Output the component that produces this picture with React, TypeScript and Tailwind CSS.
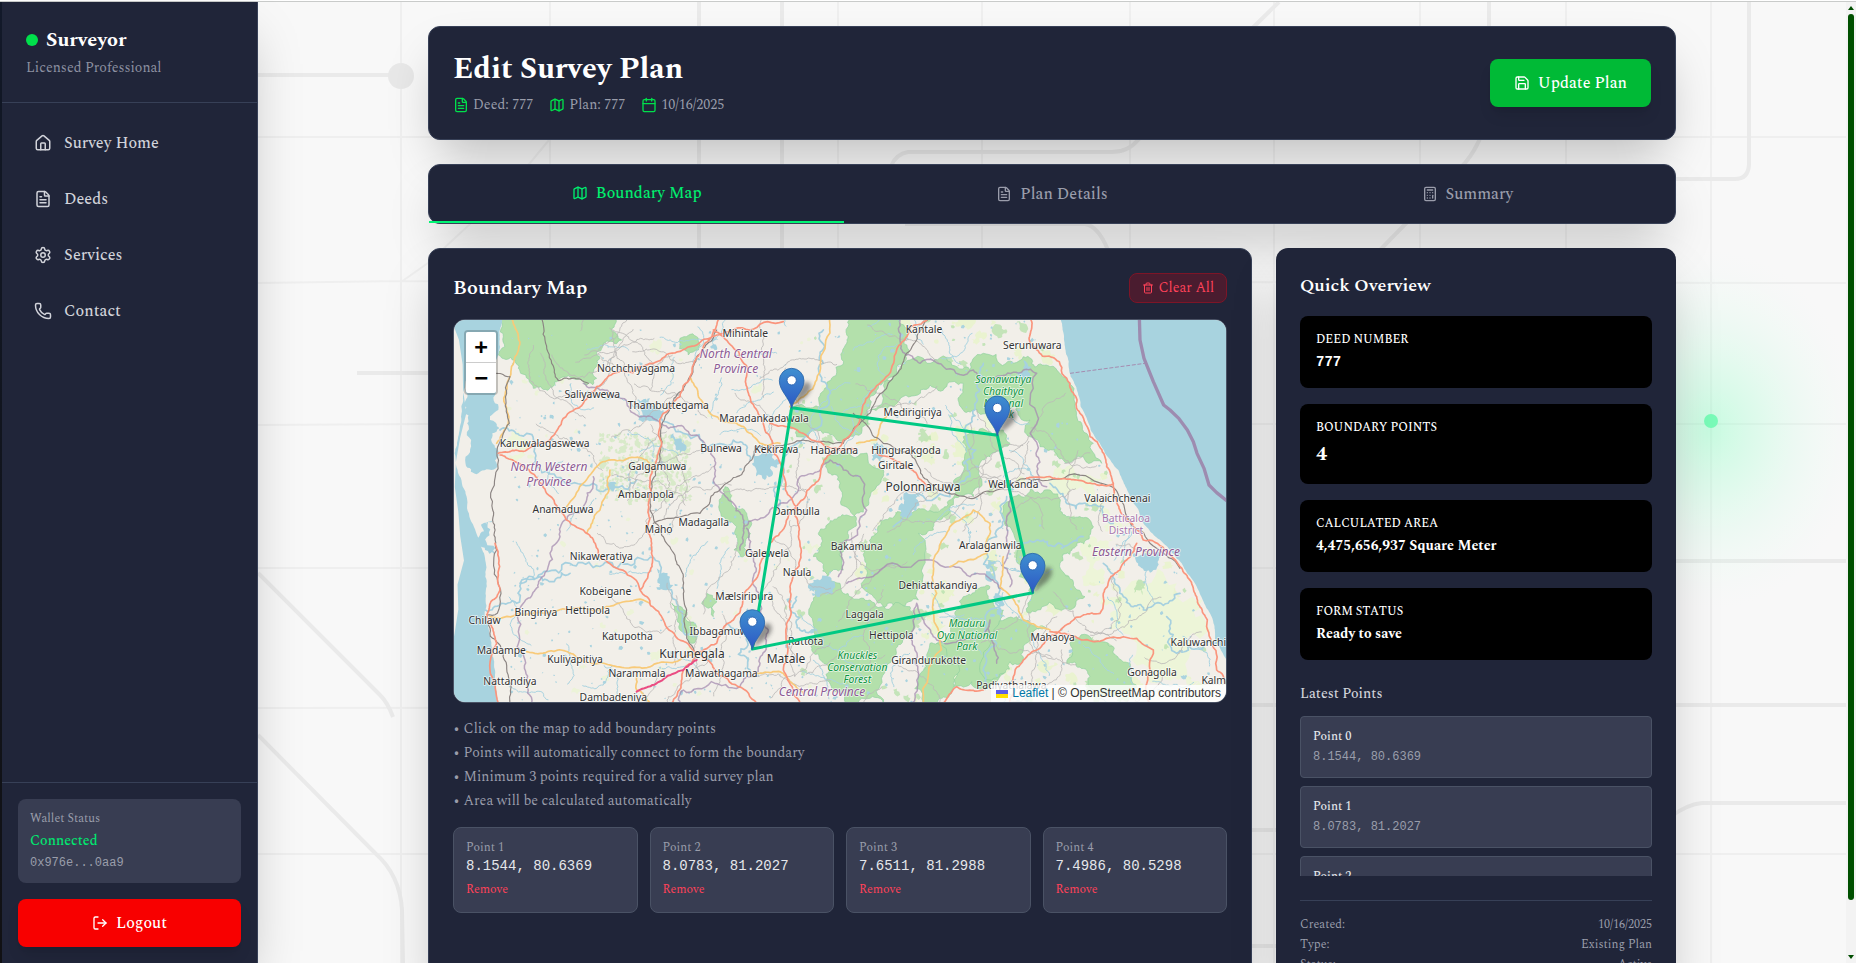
import React from "react";
import {
  Calculator,
  Calendar,
  FileText,
  House,
  LogOut,
  Map as MapIcon,
  Phone,
  Save,
  Settings,
  Trash2,
} from "lucide-react";

type Pt = [number, number];

function makeRandom(seed: number) {
  let s = seed;
  return () => {
    s = (s * 1664525 + 1013904223) % 4294967296;
    return s / 4294967296;
  };
}

/** Subdivides a line with midpoint displacement so that coasts and roads look natural. */
function rough(points: Pt[], amp: number, seed: number, closed = false): string {
  const rnd = makeRandom(seed);
  const source = closed ? [...points, points[0]] : points;
  const out: Pt[] = [source[0]];
  const split = (a: Pt, b: Pt, depth: number) => {
    const dx = b[0] - a[0];
    const dy = b[1] - a[1];
    const len = Math.hypot(dx, dy);
    if (depth === 0 || len < 10) {
      out.push(b);
      return;
    }
    const k = (rnd() - 0.5) * amp;
    const mid: Pt = [(a[0] + b[0]) / 2 - dy * k, (a[1] + b[1]) / 2 + dx * k];
    split(a, mid, depth - 1);
    split(mid, b, depth - 1);
  };
  for (let i = 1; i < source.length; i++) split(source[i - 1], source[i], 4);
  return "M" + out.map((p) => `${p[0].toFixed(1)} ${p[1].toFixed(1)}`).join("L") + (closed ? "Z" : "");
}

const westSea: Pt[] = [
  [0, 20], [157, 20], [150, 110], [132, 160], [62, 180], [40, 250], [34, 330], [14, 430], [50, 560],
  [88, 690], [106, 800], [104, 915], [125, 1010], [135, 1100], [148, 1190], [0, 1190],
];
const lagoon: Pt[] = [
  [50, 225], [138, 240], [145, 300], [120, 330], [148, 355], [125, 395], [145, 430], [138, 475], [85, 490],
  [48, 468], [62, 400], [55, 330], [42, 280],
];
const eastCoast: Pt[] = [
  [1828, 20], [1845, 110], [1862, 200], [1892, 290], [1922, 360], [1965, 430], [2005, 480], [2040, 560],
  [2080, 640], [2140, 700], [2195, 760], [2245, 840], [2285, 920], [2298, 1000], [2335, 1060],
];
const eastSea: Pt[] = [...eastCoast, [2345, 20]];

const forests: Pt[][] = [
  [[155, 20], [490, 20], [485, 60], [515, 90], [440, 125], [440, 205], [405, 225], [365, 205], [325, 212], [250, 235], [212, 190], [195, 150], [145, 135], [160, 80]],
  [[1345, 20], [1375, 130], [1330, 200], [1250, 300], [1180, 390], [1100, 360], [1040, 380], [1020, 300], [1110, 290], [1150, 200], [1190, 100], [1205, 20]],
  [[1340, 190], [1380, 150], [1440, 160], [1560, 180], [1600, 130], [1720, 140], [1800, 170], [1850, 210], [1872, 270], [1895, 340], [1930, 400], [1955, 460], [1900, 440], [1840, 450], [1770, 410], [1740, 330], [1700, 290], [1620, 310], [1540, 300], [1540, 220], [1440, 225], [1330, 290], [1260, 300]],
  [[1540, 380], [1660, 360], [1680, 400], [1620, 440], [1590, 500], [1570, 560], [1480, 620], [1450, 660], [1405, 670], [1405, 870], [1350, 885], [1270, 860], [1250, 760], [1265, 680], [1290, 630], [1400, 600], [1490, 590], [1530, 500]],
  [[1105, 670], [1190, 615], [1260, 560], [1290, 520], [1300, 480], [1180, 430], [1130, 440], [1170, 520], [1200, 600], [1190, 690], [1180, 780], [1130, 800], [1090, 740]],
  [[1100, 830], [1170, 820], [1260, 870], [1380, 890], [1390, 960], [1330, 1040], [1300, 1180], [1190, 1180], [1140, 1080], [1085, 1020], [1090, 940]],
  [[1540, 860], [1620, 830], [1660, 900], [1640, 1000], [1620, 1130], [1510, 1130], [1500, 1060], [1460, 1000], [1520, 920]],
  [[1690, 560], [1800, 540], [1850, 620], [1930, 650], [1880, 700], [1830, 760], [1905, 860], [1860, 900], [1740, 910], [1740, 850], [1700, 740]],
  [[1640, 950], [1700, 920], [1790, 955], [1720, 1050], [1660, 1090], [1620, 1110]],
  [[1860, 1000], [1920, 980], [1990, 1010], [2040, 1060], [2060, 1130], [1990, 1160], [1920, 1100], [1850, 1060]],
  [[825, 530], [850, 590], [890, 610], [895, 660], [872, 740], [852, 720], [860, 650], [808, 600]],
  [[665, 880], [740, 950], [725, 1000], [690, 960]],
  [[690, 85], [740, 80], [745, 120], [715, 135]],
  [[1440, 1000], [1480, 1010], [1510, 1120], [1460, 1180], [1420, 1180]],
  [[770, 850], [800, 870], [790, 920], [755, 880]],
];

const palePatches: Pt[][] = [
  [[1600, 320], [1650, 300], [1650, 350], [1590, 370]],
  [[1760, 480], [1960, 500], [2040, 640], [1960, 650], [1830, 560]],
  [[1950, 860], [2180, 820], [2280, 960], [2250, 1180], [2120, 1120], [1980, 960]],
  [[1880, 700], [1990, 690], [1960, 800], [1900, 820]],
  [[160, 380], [210, 370], [220, 420], [190, 450]],
];

const trunkRoads: Pt[][] = [
  [[810, 20], [760, 110], [720, 200], [690, 260], [640, 310], [635, 400], [600, 520], [595, 600], [605, 700], [595, 790], [570, 840]],
  [[145, 430], [230, 420], [300, 390], [400, 280], [440, 230], [490, 190], [600, 160], [720, 110], [820, 70], [1000, 35]],
  [[150, 435], [220, 470], [290, 550], [400, 660], [450, 740], [570, 840], [640, 930], [740, 1030], [800, 1090], [920, 1180]],
  [[790, 60], [820, 80], [895, 180], [900, 260], [960, 380], [1000, 480], [1040, 590], [1050, 700], [1020, 830], [1010, 950], [1000, 1080], [1050, 1180]],
  [[960, 340], [1060, 370], [1170, 420], [1215, 420]],
  [[1040, 590], [1110, 500], [1180, 390], [1260, 250], [1340, 120], [1380, 50], [1440, 20]],
  [[1040, 590], [960, 700], [900, 830], [850, 930], [800, 1000], [740, 1030], [700, 1080], [665, 1180]],
  [[1740, 20], [1740, 100], [1828, 155], [1860, 220], [1890, 310], [1920, 380], [1970, 470], [1990, 520], [2010, 600], [2080, 690], [2190, 770], [2235, 850], [2272, 930], [2300, 1080], [2328, 1120]],
  [[1990, 522], [1880, 510], [1800, 500], [1730, 505]],
  [[2060, 700], [2010, 780], [1960, 850], [1950, 910], [1860, 940], [1800, 980], [1720, 1050], [1690, 1100], [1680, 1180]],
  [[1800, 965], [1900, 990], [2060, 985], [2110, 1020], [2100, 1180]],
  [[135, 700], [150, 840], [110, 915], [140, 1000], [145, 1180]],
  [[1280, 430], [1370, 470], [1430, 530]],
  [[1480, 1180], [1520, 1130], [1600, 1140]],
];
const yellowRoads: Pt[][] = [
  [[720, 200], [760, 280], [860, 340], [930, 400], [990, 400]],
  [[350, 590], [450, 460], [590, 450], [620, 480]],
  [[410, 670], [450, 600], [480, 480]],
  [[120, 920], [280, 910], [440, 900], [600, 880]],
  [[230, 1025], [360, 1030], [500, 1070], [620, 1060], [740, 1030]],
  [[1570, 600], [1510, 640], [1450, 750], [1460, 850], [1420, 1180]],
  [[1570, 600], [1620, 640], [1610, 730], [1500, 770]],
  [[1140, 20], [1100, 210], [1020, 290]],
  [[180, 20], [205, 80], [180, 200], [170, 350], [140, 400]],
  [[1660, 740], [1650, 830], [1720, 930], [1800, 960]],
  [[920, 1090], [1000, 1090], [1060, 1150]],
  [[1220, 400], [1280, 390], [1310, 320]],
  [[560, 1090], [560, 1140], [600, 1180]],
];
const railways: Pt[][] = [
  [[800, 60], [740, 140], [700, 240], [645, 320], [632, 420], [605, 520], [600, 600], [650, 700], [700, 800], [710, 900], [735, 1030]],
  [[140, 190], [180, 200], [178, 340], [148, 400], [128, 600], [140, 720], [142, 910], [110, 915], [160, 1030], [180, 1180]],
  [[610, 640], [750, 610], [830, 520], [905, 450], [915, 410], [1060, 390], [1180, 400], [1260, 310], [1330, 200], [1400, 90], [1450, 20]],
  [[1210, 310], [1300, 400], [1380, 430], [1440, 520], [1560, 565], [1640, 540], [1730, 505], [1980, 528], [2050, 650], [2190, 775]],
  [[275, 20], [285, 90], [305, 160], [325, 212], [365, 205], [415, 220]],
];
const borders: Pt[][] = [
  [[400, 220], [450, 240], [540, 300], [620, 330], [700, 350], [780, 420], [790, 510], [850, 580], [880, 660], [870, 720]],
  [[880, 655], [960, 600], [1030, 560], [1050, 500], [1140, 450], [1180, 480], [1230, 500], [1200, 690], [1170, 700], [1165, 800]],
  [[430, 500], [400, 600], [330, 680], [270, 810], [220, 880], [225, 1050], [245, 1180]],
  [[1345, 20], [1350, 90], [1410, 160], [1570, 180], [1600, 220], [1720, 180], [1760, 190], [1758, 430], [1790, 530]],
  [[1680, 560], [1670, 700], [1680, 830]],
  [[1190, 820], [1290, 780], [1500, 770], [1560, 800], [1660, 840]],
  [[890, 655], [915, 760], [930, 880], [955, 960], [930, 1060], [870, 1130], [700, 1140], [690, 1180]],
  [[1400, 880], [1395, 1020], [1385, 1180]],
  [[1400, 880], [1450, 980], [1500, 1000], [1620, 930], [1640, 1060]],
];
const rivers: Pt[][] = [
  [[210, 820], [360, 760], [500, 775], [630, 765], [680, 880], [730, 980]],
  [[100, 900], [200, 880], [270, 800], [360, 790]],
  [[1600, 160], [1590, 240], [1560, 340], [1560, 500], [1500, 560], [1330, 650]],
  [[1670, 560], [1640, 680], [1650, 840], [1640, 1000], [1610, 1120]],
  [[1120, 60], [1120, 160], [1130, 290], [1000, 470], [980, 600]],
  [[560, 290], [700, 370], [850, 390], [900, 450]],
  [[150, 360], [230, 370], [260, 470], [430, 520], [560, 510]],
  [[1040, 860], [1020, 900], [1050, 960], [1100, 960]],
  [[1800, 520], [1850, 580], [1960, 590], [1990, 640]],
  [[1960, 760], [2020, 860], [2080, 900], [2190, 850]],
  [[2150, 920], [2180, 1030], [2260, 1010], [2300, 1000]],
  [[1700, 700], [1780, 690], [1860, 700], [1900, 680]],
  [[830, 940], [890, 980], [900, 1080]],
];
const lakes: Pt[][] = [
  [[560, 270], [600, 265], [640, 300], [620, 335], [565, 330]],
  [[910, 430], [965, 425], [985, 450], [960, 475], [945, 510], [915, 470]],
  [[620, 775], [660, 800], [670, 825], [640, 840], [622, 810]],
  [[1360, 560], [1410, 545], [1400, 590], [1370, 625], [1345, 600]],
  [[1270, 400], [1310, 410], [1300, 460], [1265, 450]],
  [[1635, 850], [1660, 860], [1665, 920], [1620, 920]],
  [[1610, 750], [1640, 760], [1630, 810], [1605, 800]],
  [[1720, 150], [1745, 170], [1740, 200], [1700, 200]],
  [[1090, 810], [1140, 800], [1150, 850], [1110, 860]],
  [[780, 80], [805, 90], [800, 120], [780, 110]],
  [[2050, 730], [2130, 730], [2110, 780], [2070, 770]],
  [[670, 370], [700, 400], [690, 430], [672, 400]],
  [[470, 510], [500, 520], [490, 545], [470, 540]],
  [[100, 640], [130, 630], [135, 730], [105, 720]],
];

function insideLand(x: number, y: number) {
  if (x < 175) return false;
  for (let i = 1; i < eastCoast.length; i++) {
    const [x0, y0] = eastCoast[i - 1];
    const [x1, y1] = eastCoast[i];
    if (y >= y0 && y <= y1) return x < x0 + ((x1 - x0) * (y - y0)) / (y1 - y0) - 30;
  }
  return x < 2300;
}

type Area = [number, number, number, number];
const everywhere: Area = [12, 30, 2316, 1146];

function scatter(count: number, seed: number, min: number, max: number, amp: number, area: Area = everywhere): string {
  const rnd = makeRandom(seed);
  const parts: string[] = [];
  while (parts.length < count) {
    const x = area[0] + rnd() * area[2];
    const y = area[1] + rnd() * area[3];
    const r = min + rnd() * rnd() * (max - min);
    if (!insideLand(x, y)) continue;
    const ring: Pt[] = [];
    for (let k = 0; k < 5; k++) {
      const a = (k / 5) * Math.PI * 2;
      const q = r * (0.5 + rnd());
      ring.push([x + Math.cos(a) * q, y + Math.sin(a) * q]);
    }
    parts.push(rough(ring, amp, Math.floor(rnd() * 99999), true));
  }
  return parts.join("");
}

function wander(count: number, seed: number, step: number): string {
  const rnd = makeRandom(seed);
  const parts: string[] = [];
  while (parts.length < count) {
    let x = 150 + rnd() * 2050;
    let y = 30 + rnd() * 1146;
    let a = rnd() * Math.PI * 2;
    const pts: Pt[] = [];
    while (pts.length < 7 && insideLand(x, y)) {
      pts.push([x, y]);
      a += (rnd() - 0.5) * 1.3;
      x += Math.cos(a) * step;
      y += Math.sin(a) * step;
    }
    if (pts.length > 2) parts.push(rough(pts, 0.4, Math.floor(rnd() * 99999)));
  }
  return parts.join("");
}

const texture = {
  ponds: scatter(620, 11, 2, 8, 0.5),
  paleWest: scatter(70, 29, 4, 20, 0.9, [150, 30, 1000, 1146]),
  paleEast: scatter(170, 23, 6, 36, 0.9, [1150, 30, 1178, 1146]),
  scrub: scatter(420, 97, 3, 11, 0.9, [450, 372, 270, 200]),
  woods: scatter(170, 37, 5, 28, 0.9, [1000, 30, 1328, 1146]),
  lanes: wander(80, 51, 42),
  streams: wander(75, 67, 22),
};

type Label = { x: number; y: number; t: string; s?: number };
const towns: Label[] = [
  { x: 886, y: 80, t: "Mihintale" },
  { x: 558, y: 185, t: "Nochchiyagama" },
  { x: 427, y: 265, t: "Saliyawewa" },
  { x: 655, y: 298, t: "Thambuttegama" },
  { x: 942, y: 335, t: "Maradankadawala" },
  { x: 284, y: 412, t: "Karuwalagaswewa" },
  { x: 813, y: 426, t: "Bulnewa" },
  { x: 979, y: 430, t: "Kekirawa" },
  { x: 1153, y: 432, t: "Habarana" },
  { x: 622, y: 480, t: "Galgamuwa" },
  { x: 588, y: 564, t: "Ambanpola" },
  { x: 339, y: 610, t: "Anamaduwa" },
  { x: 1039, y: 614, t: "Dambulla" },
  { x: 761, y: 649, t: "Madagalla" },
  { x: 626, y: 669, t: "Maho" },
  { x: 454, y: 751, t: "Nikaweratiya" },
  { x: 951, y: 741, t: "Galewela" },
  { x: 1220, y: 721, t: "Bakamuna" },
  { x: 1041, y: 797, t: "Naula" },
  { x: 466, y: 855, t: "Kobeigane" },
  { x: 883, y: 869, t: "Mælsiripura" },
  { x: 413, y: 911, t: "Hettipola" },
  { x: 258, y: 919, t: "Bingiriya" },
  { x: 104, y: 942, t: "Chilaw" },
  { x: 815, y: 974, t: "Ibbagamuwa" },
  { x: 532, y: 990, t: "Katupotha" },
  { x: 154, y: 1032, t: "Madampe" },
  { x: 726, y: 1043, t: "Kurunegala", s: 36 },
  { x: 375, y: 1060, t: "Kuliyapitiya" },
  { x: 1067, y: 1004, t: "Rattota" },
  { x: 1008, y: 1059, t: "Matale", s: 36 },
  { x: 561, y: 1102, t: "Narammala" },
  { x: 814, y: 1101, t: "Mawathagama" },
  { x: 180, y: 1124, t: "Nattandiya" },
  { x: 490, y: 1172, t: "Dambadeniya" },
  { x: 1422, y: 70, t: "Kantale" },
  { x: 1747, y: 116, t: "Serunuwara" },
  { x: 1388, y: 319, t: "Medirigiriya" },
  { x: 1368, y: 431, t: "Hingurakgoda" },
  { x: 1337, y: 476, t: "Giritale" },
  { x: 1419, y: 543, t: "Polonnaruwa", s: 36 },
  { x: 1690, y: 534, t: "Welikanda" },
  { x: 2002, y: 575, t: "Valaichchenai" },
  { x: 1621, y: 716, t: "Aralaganwila" },
  { x: 1464, y: 838, t: "Dehiattakandiya" },
  { x: 1244, y: 924, t: "Laggala" },
  { x: 1324, y: 986, t: "Hettipola" },
  { x: 1808, y: 993, t: "Mahaoya" },
  { x: 2245, y: 1007, t: "Kaluwanchi" },
  { x: 1436, y: 1061, t: "Girandurukotte" },
  { x: 2106, y: 1098, t: "Gonagolla" },
  { x: 2291, y: 1121, t: "Kalm" },
  { x: 1684, y: 1137, t: "Padiyathalawa" },
];
const provinces: Label[] = [
  { x: 857, y: 143, t: "North Central" },
  { x: 857, y: 188, t: "Province" },
  { x: 297, y: 482, t: "North Western" },
  { x: 297, y: 527, t: "Province" },
  { x: 1116, y: 1159, t: "Central Province" },
  { x: 2058, y: 739, t: "Eastern Province" },
];
const parks: Label[] = [
  { x: 1660, y: 219, t: "Somawatiya" },
  { x: 1660, y: 254, t: "Chaithya" },
  { x: 1660, y: 290, t: "National" },
  { x: 1660, y: 325, t: "Park" },
  { x: 1551, y: 950, t: "Maduru" },
  { x: 1551, y: 986, t: "Oya National" },
  { x: 1551, y: 1021, t: "Park" },
  { x: 1222, y: 1046, t: "Knuckles" },
  { x: 1222, y: 1082, t: "Conservation" },
  { x: 1222, y: 1118, t: "Forest" },
];

const pins: Pt[] = [[1025, 293], [1642, 376], [1748, 848], [907, 1017]];

function Lines({ data, amp = 0.25, seed, ...rest }: { data: Pt[][]; amp?: number; seed: number } & React.SVGProps<SVGPathElement>) {
  return <path d={data.map((p, i) => rough(p, amp, seed + i)).join("")} fill="none" strokeLinejoin="round" strokeLinecap="round" {...rest} />;
}

function Labels({ data, ...rest }: { data: Label[] } & React.SVGProps<SVGGElement>) {
  return (
    <g textAnchor="middle" stroke="#ffffff" strokeOpacity="0.7" strokeWidth="5" paintOrder="stroke" strokeLinejoin="round" fontFamily="'Noto Sans', sans-serif" {...rest}>
      {data.map((l) => (
        <text key={`${l.t}-${l.x}-${l.y}`} x={l.x} y={l.y} fontSize={l.s}>
          {l.t}
        </text>
      ))}
    </g>
  );
}

function MapDrawing() {
  return (
    <svg viewBox="12 30 2316 1146" preserveAspectRatio="xMidYMid slice" className="block h-full w-full" role="img" aria-label="Survey boundary map">
      <defs>
        <linearGradient id="pin" x1="0" y1="0" x2="0" y2="1">
          <stop offset="0" stopColor="#3f8fd0" />
          <stop offset="1" stopColor="#2c57c4" />
        </linearGradient>
        <filter id="soft" x="-50%" y="-50%" width="200%" height="200%">
          <feGaussianBlur stdDeviation="6" />
        </filter>
      </defs>
      <rect x="-1000" y="-1000" width="5000" height="4000" fill="#f2efe9" />
      <path d={texture.paleWest} fill="#ecf3d8" />
      <path d={texture.paleEast} fill="#eaf3d0" />
      {palePatches.map((p, i) => (
        <path key={i} d={rough(p, 0.9, 300 + i, true)} fill="#edf5d8" />
      ))}
      <path d={texture.scrub} fill="#cfe8bd" opacity="0.75" />
      <path d={texture.woods} fill="#b8e1ad" opacity="0.8" />
      {forests.map((p, i) => (
        <path key={i} d={rough(p, 0.55, 100 + i, true)} fill="#b3e0ab" stroke="#8fd0a0" strokeWidth="2" />
      ))}
      <path d={texture.streams} fill="none" stroke="#a9d3e0" strokeWidth="3" />
      <Lines data={rivers} amp={0.6} seed={500} stroke="#a6d0df" strokeWidth="5" />
      <path d={texture.ponds} fill="#aad3df" />
      {lakes.map((p, i) => (
        <path key={i} d={rough(p, 0.9, 700 + i, true)} fill="#a6d2df" />
      ))}
      <path d={texture.lanes} fill="none" stroke="#bcb9b8" strokeWidth="2.5" />
      <path d={rough(westSea, 0.15, 3, true)} fill="#a8d3df" />
      <path d={rough(lagoon, 0.5, 5, true)} fill="#a8d3df" />
      <path d={rough(eastSea, 0.12, 8, true)} fill="#a8d3df" />
      <Lines data={borders} amp={0.4} seed={900} stroke="#a58cb0" strokeOpacity="0.75" strokeWidth="4.5" />
      <path d="M1860 190L2085 160" stroke="#a58cb0" strokeWidth="3" strokeDasharray="12 5" fill="none" />
      <Lines data={yellowRoads} seed={400} stroke="#f8ca79" strokeWidth="5" />
      <Lines data={railways} seed={450} stroke="#8c8583" strokeWidth="3.5" />
      <Lines data={trunkRoads} seed={200} stroke="#fa957d" strokeWidth="5" />
      <Lines data={[[[740, 1050], [650, 1100], [560, 1145]]]} seed={4} stroke="#ea4c82" strokeWidth="6" />
      <path
        d="M2068 20L2070 90L2082 145L2110 215L2141 285L2160 300L2187 326L2212 360L2230 395L2241 430L2262 475L2277 525L2300 548L2335 576"
        fill="none"
        stroke="#9d8cb0"
        strokeWidth="10"
        strokeLinejoin="round"
      />
      <Labels data={towns} fill="#333333" fontSize="31" />
      <Labels data={provinces} fill="#8d5a94" fontSize="36" fontStyle="italic" />
      <Labels data={[{ x: 2028, y: 636, t: "Batticaloa" }, { x: 2028, y: 671, t: "District" }]} fill="#a878ae" fontSize="31" />
      <Labels data={parks} fill="#0b9440" fontSize="31" fontStyle="italic" />
      <path d="M1025 293L1642 376L1748 848L907 1017Z" fill="none" stroke="#00c983" strokeWidth="9" strokeLinejoin="round" />
      {pins.map(([x, y]) => (
        <g key={x} transform={`translate(${x} ${y})`}>
          <path d="M2 -2L18 -50Q38 -86 54 -74Q68 -54 34 -26Z" fill="#333333" opacity="0.5" filter="url(#soft)" />
          <path d="M0 2C-6 -30 -37 -50 -37 -81A37 37 0 0 1 37 -81C37 -50 6 -30 0 2Z" fill="url(#pin)" stroke="#2a66a8" strokeWidth="2.5" />
          <circle cx="0" cy="-82" r="14" fill="#ffffff" stroke="#2c66b4" strokeWidth="3" />
        </g>
      ))}
    </svg>
  );
}

function Backdrop() {
  return (
    <svg viewBox="258 2 1588 961" preserveAspectRatio="xMidYMin slice" className="absolute inset-0 h-full w-full" aria-hidden="true">
      <defs>
        <radialGradient id="glow">
          <stop offset="0" stopColor="#8dffc4" stopOpacity="0.45" />
          <stop offset="0.35" stopColor="#a8ffd2" stopOpacity="0.3" />
          <stop offset="1" stopColor="#e6fff2" stopOpacity="0" />
        </radialGradient>
      </defs>
      <rect x="258" y="2" width="1588" height="961" fill="#f8f8f8" />
      <path
        d="M401 2V963M550 2V963M838 2V963M982 2V963M1130 2V963M1274 2V963M1420 2V963M1566 2V963M1711 2V963M258 137H1846M258 283L401 281L1846 283M258 425L428 424L1846 424M258 568H1676M258 708L1252 707M258 854H1846M401 282L428 263L470 224L530 163L549 140"
        fill="none"
        stroke="#efefef"
        strokeWidth="2"
      />
      <path
        d="M258 75H395M699 2V963M782 2V963M357 373H428M258 573L380 695Q388 703 393 717M258 735L375 853Q400 875 402 910L403 963M1279 2L1138 140Q1128 152 1112 152H908Q896 154 891 166M905 224H1085Q1098 226 1108 250M1489 2V100Q1486 138 1465 163L1380 250M1749 2V165Q1748 179 1735 179H1660M1676 561H1846M1252 705H1846M1846 803H1702Q1688 804 1670 817M1252 830H1276M1252 946H1276"
        fill="none"
        stroke="#eaeaea"
        strokeWidth="4"
      />
      <circle cx="401" cy="76" r="13" fill="#e8e8e8" />
      <ellipse cx="1710" cy="430" rx="150" ry="180" fill="url(#glow)" />
      <circle cx="1711" cy="421" r="7" fill="#79fbb8" />
    </svg>
  );
}

const navItems = [
  { label: "Survey Home", Icon: House },
  { label: "Deeds", Icon: FileText },
  { label: "Services", Icon: Settings },
  { label: "Contact", Icon: Phone },
];

function Sidebar() {
  return (
    <aside className="relative z-10 flex w-64 shrink-0 flex-col border-r border-[#374057] bg-[#202539] shadow-2xl">
      <div className="border-b border-[#374057] p-6">
        <h2 className="flex items-center gap-2 text-xl font-bold text-white">
          <span className="h-3 w-3 rounded-full bg-[#00e04b]" />
          Surveyor
        </h2>
        <p className="mt-1 text-sm text-[#8d91a1]">Licensed Professional</p>
      </div>
      <nav className="flex flex-1 flex-col gap-2 p-4">
        {navItems.map(({ label, Icon }) => (
          <a key={label} href="#" className="flex h-12 items-center gap-3 rounded-lg px-4 text-base font-medium text-[#d1d3da]">
            <Icon size={18} />
            {label}
          </a>
        ))}
      </nav>
      <div className="border-t border-[#374057] p-4">
        <div className="mb-4 flex flex-col gap-1 rounded-lg bg-[#383d52] p-3">
          <p className="text-xs text-[#9a9dab]">Wallet Status</p>
          <p className="text-sm font-medium text-[#00e870]">Connected</p>
          <p className="font-['Liberation_Mono',monospace] text-xs text-[#9a9dab]">0x976e...0aa9</p>
        </div>
        <button type="button" className="flex h-12 w-full items-center justify-center gap-2 rounded-lg bg-[#f80000] text-base font-medium text-white shadow-lg">
          <LogOut size={16} />
          Logout
        </button>
      </div>
    </aside>
  );
}

const card = "rounded-xl border border-[#374057] bg-[#202539] shadow-2xl";

const points = [
  { lat: "8.1544", lng: "80.6369" },
  { lat: "8.0783", lng: "81.2027" },
  { lat: "7.6511", lng: "81.2988" },
  { lat: "7.4986", lng: "80.5298" },
];

const stats = [
  { label: "DEED NUMBER", value: "777", style: "font-['Liberation_Mono',monospace] text-sm" },
  { label: "BOUNDARY POINTS", value: "4", style: "text-xl" },
  { label: "CALCULATED AREA", value: "4,475,656,937 Square Meter", style: "text-sm" },
  { label: "FORM STATUS", value: "Ready to save", style: "text-sm" },
];

const tips = [
  "Click on the map to add boundary points",
  "Points will automatically connect to form the boundary",
  "Minimum 3 points required for a valid survey plan",
  "Area will be calculated automatically",
];

const meta = [
  ["Created:", "10/16/2025"],
  ["Type:", "Existing Plan"],
  ["Status:", "Active"],
];

function PlanHeader() {
  return (
    <header className={`${card} flex items-center justify-between p-6`}>
      <div>
        <h1 className="text-3xl font-bold text-white">Edit Survey Plan</h1>
        <div className="mt-2 flex gap-4 text-sm text-[#9a9dab]">
          <span className="flex items-center gap-1">
            <FileText size={16} className="text-[#00e04b]" />
            Deed: 777
          </span>
          <span className="flex items-center gap-1">
            <MapIcon size={16} className="text-[#00e04b]" />
            Plan: 777
          </span>
          <span className="flex items-center gap-1">
            <Calendar size={16} className="text-[#00e04b]" />
            10/16/2025
          </span>
        </div>
      </div>
      <button type="button" className="flex h-12 items-center gap-2 rounded-lg bg-[#00ba36] px-6 text-base font-medium text-white shadow-lg">
        <Save size={16} />
        Update Plan
      </button>
    </header>
  );
}

function Tabs() {
  return (
    <div role="tablist" className={`${card} grid grid-cols-3 text-base font-medium`}>
      <button type="button" role="tab" aria-selected="true" className="flex items-center justify-center gap-2 border-b-2 border-[#00f573] py-4 text-[#00ee6e]">
        <MapIcon size={16} />
        Boundary Map
      </button>
      <button type="button" role="tab" aria-selected="false" className="flex items-center justify-center gap-2 py-4 text-[#9a9dab]">
        <FileText size={16} />
        Plan Details
      </button>
      <button type="button" role="tab" aria-selected="false" className="flex items-center justify-center gap-2 py-4 text-[#9a9dab]">
        <Calculator size={16} />
        Summary
      </button>
    </div>
  );
}

function MapPanel() {
  return (
    <section className={`${card} col-span-2 p-6`}>
      <div className="mb-4 flex items-center justify-between">
        <h2 className="text-xl font-semibold text-white">Boundary Map</h2>
        <button type="button" className="flex items-center gap-1 rounded-lg border border-[#7d1527] bg-[#4a1c2f] px-3 py-1 text-sm text-[#ff4259]">
          <Trash2 size={12} />
          Clear All
        </button>
      </div>
      <div className="relative h-96 overflow-hidden rounded-xl border border-[#4a5265]">
        <MapDrawing />
        <div className="absolute top-2.5 left-2.5 flex flex-col rounded border-2 border-black/20 bg-clip-padding font-['DejaVu_Sans_Mono',monospace] text-[22px] font-bold text-black">
          <button type="button" aria-label="Zoom in" className="h-[31px] w-[30px] rounded-t-xs border-b border-[#cccccc] bg-white leading-[30px]">+</button>
          <button type="button" aria-label="Zoom out" className="h-[30px] w-[30px] rounded-b-xs bg-white leading-[30px]">−</button>
        </div>
        <div className="absolute right-0 bottom-0 flex items-center bg-white/80 px-[5px] font-['Liberation_Sans',sans-serif] text-[12px] leading-[17px] text-[#333333]">
          <a href="#" className="flex items-center gap-1 text-[#0078a8]">
            <svg width="12" height="8" viewBox="0 0 12 8" aria-hidden="true">
              <path fill="#5c5fe8" d="M0 0h12v4H0z" />
              <path fill="#ffe000" d="M0 4h12v4H0z" />
            </svg>
            Leaflet
          </a>
          <span className="whitespace-pre"> | © OpenStreetMap contributors</span>
        </div>
      </div>
      <div className="mt-4 flex flex-col gap-1 text-sm text-[#9a9dab]">
        {tips.map((t) => (
          <p key={t}>• {t}</p>
        ))}
      </div>
      <div className="mt-4 grid grid-cols-4 gap-3">
        {points.map((p, i) => (
          <div key={p.lat} className="rounded-lg border border-[#4a5265] bg-[#383d52] p-3">
            <p className="text-xs text-[#9a9dab]">Point {i + 1}</p>
            <p className="font-['Liberation_Mono',monospace] text-sm text-[#e5e7eb]">
              {p.lat}, {p.lng}
            </p>
            <div className="flex h-6 pt-1.5">
              <button type="button" className="h-4 text-xs text-[#ff4259]">Remove</button>
            </div>
          </div>
        ))}
      </div>
    </section>
  );
}

function Overview() {
  return (
    <aside className="rounded-xl bg-[#202539] p-6 shadow-2xl">
      <h2 className="mb-4 text-lg font-semibold text-white">Quick Overview</h2>
      <div className="flex flex-col gap-4">
        {stats.map((s) => (
          <div key={s.label} className="rounded-lg bg-black p-4 text-white">
            <p className="mb-1 text-xs font-medium">{s.label}</p>
            <p className={`font-bold ${s.style}`}>{s.value}</p>
          </div>
        ))}
      </div>
      <h3 className="mt-6 mb-3 text-sm font-medium text-[#d1d3da]">Latest Points</h3>
      <div className="flex max-h-40 flex-col gap-2 overflow-hidden">
        {points.map((p, i) => (
          <div key={p.lat} className="flex shrink-0 flex-col gap-1 rounded border border-[#4a5265] bg-[#383d52] p-3">
            <p className="text-xs font-medium text-[#e5e7eb]">Point {i}</p>
            <p className="font-['Liberation_Mono',monospace] text-xs text-[#9a9dab]">
              {p.lat}, {p.lng}
            </p>
          </div>
        ))}
      </div>
      <dl className="mt-6 flex flex-col gap-1 border-t border-[#374057] pt-4 text-xs text-[#9a9dab]">
        {meta.map(([k, v]) => (
          <div key={k} className="flex justify-between">
            <dt>{k}</dt>
            <dd>{v}</dd>
          </div>
        ))}
      </dl>
    </aside>
  );
}

export default function App() {
  return (
    <div className="flex h-screen flex-col overflow-hidden bg-white pt-px font-['Spectral','Liberation_Serif',serif]">
      <div className="flex min-h-0 flex-1 border-t border-[#c9cbca]">
        <div className="w-[2px] shrink-0 bg-linear-to-b from-[#131a2b] to-[#131316]" />
        <Sidebar />
        <main className="relative min-w-0 flex-1 overflow-hidden">
          <Backdrop />
          <div className="relative mx-auto flex max-w-7xl flex-col gap-6 px-4 py-6">
            <PlanHeader />
            <Tabs />
            <div className="grid grid-cols-3 gap-6">
              <MapPanel />
              <Overview />
            </div>
          </div>
        </main>
        <div className="flex w-2.5 shrink-0 flex-col items-center justify-between bg-[#f3f3f3] py-1" aria-hidden="true">
          <svg width="6" height="4" viewBox="0 0 6 4">
            <path d="M3 0L6 4H0Z" fill="#004d00" />
          </svg>
          <div className="mt-1 mb-auto h-[93%] w-1.5 rounded-full bg-[#005000]" />
          <svg width="6" height="4" viewBox="0 0 6 4">
            <path d="M3 4L6 0H0Z" fill="#004d00" />
          </svg>
        </div>
      </div>
    </div>
  );
}
